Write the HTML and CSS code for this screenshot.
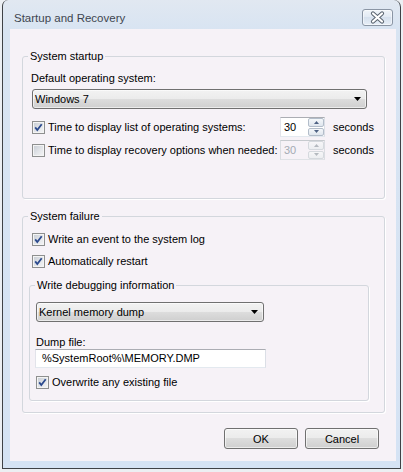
FILE: index.html
```html
<!DOCTYPE html>
<html>
<head>
<meta charset="utf-8">
<title>Startup and Recovery</title>
<link rel="stylesheet" href="styles.css">
</head>
<body>
<div class="window">
  <div class="titlebar">
    <div class="title">Startup and Recovery</div>
    <div class="close">
      <svg width="29" height="15" viewBox="0 0 29 15">
        <path d="M10 3.5 L19 11.5 M19 3.5 L10 11.5" stroke="#59636f" stroke-width="4.2" stroke-linecap="round" fill="none"/>
        <path d="M10 3.5 L19 11.5 M19 3.5 L10 11.5" stroke="#ffffff" stroke-width="2.2" stroke-linecap="round" fill="none"/>
      </svg>
    </div>
  </div>
  <div class="content">
    <fieldset class="group g1">
      <legend>System startup</legend>
      <div class="lbl">Default operating system:</div>
      <div class="combo c1"><span class="ctext">Windows 7</span><svg class="arr" width="7" height="4" viewBox="0 0 7 4"><path d="M0 0H7L3.5 4Z" fill="#000"/></svg></div>
      <div class="trow r1">
        <label class="chk"><span class="cb"><svg width="11" height="11" viewBox="0 0 11 11"><path d="M2.2 5.4 L4.3 8 L8.7 2.3" stroke="#2c4a8e" stroke-width="1.8" fill="none"/></svg></span>Time to display list of operating systems:</label>
        <div class="spin"><span class="val">30</span><span class="sbs"><span class="sb"><svg width="5" height="3" viewBox="0 0 5 3"><path d="M2.5 0L5 3H0Z" fill="#4d6183"/></svg></span><span class="sb"><svg width="5" height="3" viewBox="0 0 5 3"><path d="M0 0H5L2.5 3Z" fill="#4d6183"/></svg></span></span></div>
        <span class="unit">seconds</span>
      </div>
      <div class="trow r2">
        <label class="chk"><span class="cb"></span>Time to display recovery options when needed:</label>
        <div class="spin dis"><span class="val">30</span><span class="sbs"><span class="sb"><svg width="5" height="3" viewBox="0 0 5 3"><path d="M2.5 0L5 3H0Z" fill="#b4b9bf"/></svg></span><span class="sb"><svg width="5" height="3" viewBox="0 0 5 3"><path d="M0 0H5L2.5 3Z" fill="#b4b9bf"/></svg></span></span></div>
        <span class="unit">seconds</span>
      </div>
    </fieldset>

    <fieldset class="group g2">
      <legend>System failure</legend>
      <label class="chk line first"><span class="cb"><svg width="11" height="11" viewBox="0 0 11 11"><path d="M2.2 5.4 L4.3 8 L8.7 2.3" stroke="#2c4a8e" stroke-width="1.8" fill="none"/></svg></span>Write an event to the system log</label>
      <label class="chk line second"><span class="cb"><svg width="11" height="11" viewBox="0 0 11 11"><path d="M2.2 5.4 L4.3 8 L8.7 2.3" stroke="#2c4a8e" stroke-width="1.8" fill="none"/></svg></span>Automatically restart</label>
      <fieldset class="group inner">
        <legend>Write debugging information</legend>
        <div class="combo c2"><span class="ctext">Kernel memory dump</span><svg class="arr" width="7" height="4" viewBox="0 0 7 4"><path d="M0 0H7L3.5 4Z" fill="#000"/></svg></div>
        <div class="lbl2">Dump file:</div>
        <div class="tb">%SystemRoot%\MEMORY.DMP</div>
        <label class="chk line over"><span class="cb"><svg width="11" height="11" viewBox="0 0 11 11"><path d="M2.2 5.4 L4.3 8 L8.7 2.3" stroke="#2c4a8e" stroke-width="1.8" fill="none"/></svg></span>Overwrite any existing file</label>
      </fieldset>
    </fieldset>

    <div class="buttons">
      <button class="btn">OK</button>
      <button class="btn">Cancel</button>
    </div>
  </div>
</div>
</body>
</html>
```
FILE: styles.css
```css
html, body {
  margin: 0;
  padding: 0;
}
body {
  background: #eceff3;
  font-family: "Liberation Sans", Arial, sans-serif;
  font-size: 11px;
  color: #000;
}
.window {
  margin-left: 2px;
  width: 399px;
  height: 469px;
  box-sizing: border-box;
  border: 1px solid #3f4246;
  border-top: none;
  border-radius: 6px 7px 0 0;
  background: linear-gradient(#e1e8f1 0, #d8e4f2 30px, #d5e3f4 100%);
  padding: 0 4px 7px 7px;
  display: flex;
  flex-direction: column;
}
.titlebar {
  height: 29px;
  display: flex;
  align-items: flex-start;
  flex: none;
}
.title {
  flex: 1;
  margin: 11px 0 0 4px;
  font-size: 11.5px;
  line-height: 14px;
  color: #3e4550;
}
.close {
  margin: 9px 3px 0 0;
  width: 31px;
  height: 17px;
  box-sizing: border-box;
  border: 1px solid #8a95a4;
  border-radius: 3px;
  background: linear-gradient(rgba(255,255,255,0.55), rgba(255,255,255,0.15) 50%, rgba(200,212,228,0.3) 50%, rgba(255,255,255,0.35));
  box-shadow: inset 0 0 0 1px rgba(255,255,255,0.5);
}
.close svg { display: block; }
.content {
  height: 432px;
  flex: none;
  box-sizing: border-box;
  background: #f6f2f7;
  padding: 0 11px 0 12px;
  display: flex;
  flex-direction: column;
}
.group {
  margin: 0;
  min-width: 0;
  border: 1px solid #d3d7dd;
  border-radius: 3px;
  box-shadow: 1px 1px 0 #ffffff;
  padding: 0 0 0 6px;
}
.group > legend {
  padding: 0 2px;
  margin-left: -1px;
  line-height: 14px;
}
.g1 {
  margin-top: 20px;
  padding-top: 8px;
  padding-bottom: 38px;
}
.g2 {
  margin-top: 10px;
  padding-top: 9px;
  padding-bottom: 11px;
}
.inner {
  margin-top: 10px;
  width: 340px;
  box-sizing: border-box;
  padding: 10px 0 11px 5px;
}
.inner > legend {
  margin-left: 0;
}
.lbl {
  margin-left: 2px;
  line-height: 14px;
}
.combo {
  height: 20px;
  box-sizing: border-box;
  border: 1px solid #707070;
  border-radius: 3px;
  background: linear-gradient(#f2f2f2 0, #ebebeb 50%, #dddddd 50%, #cfcfcf 100%);
  box-shadow: inset 0 0 0 1px rgba(255,255,255,0.6);
  display: flex;
  align-items: center;
  padding-left: 2px;
}
.combo .ctext { flex: 1; line-height: 14px; }
.combo .arr { margin-right: 5px; display: block; }
.c1 {
  margin: 4px 0 0 3px;
  width: 335px;
}
.c2 {
  margin-left: 1px;
  width: 228px;
}
.chk {
  display: flex;
  align-items: center;
  gap: 3px;
  line-height: 14px;
  white-space: nowrap;
}
.cb {
  width: 13px;
  height: 13px;
  box-sizing: border-box;
  flex: none;
  border: 1px solid #8e8f8f;
  background: linear-gradient(135deg, #c6cbd3 0, #e3e5e9 55%, #f5f5f6 100%);
  box-shadow: inset 0 0 0 1px #f4f4f4;
}
.cb svg { display: block; }
.trow {
  display: grid;
  grid-template-columns: 248px 45px auto;
  align-items: center;
  height: 20px;
  margin-left: 3px;
}
.r1 { margin-top: 8px; }
.r2 { margin-top: 3px; }
.spin {
  height: 20px;
  box-sizing: border-box;
  border: 1px solid;
  border-color: #abadb3 #dbdfe6 #e3e9ef #e2e3ea;
  background: #ffffff;
  display: flex;
}
.spin .val {
  flex: 1;
  padding-left: 3px;
  line-height: 18px;
}
.sbs {
  width: 16px;
  display: flex;
  flex-direction: column;
  gap: 1px;
  padding: 0 0 0 0;
}
.sb {
  flex: 1;
  box-sizing: border-box;
  border: 1px solid #b3bdca;
  border-radius: 2px;
  background: linear-gradient(#f4f7fa, #dfe6ee);
  display: flex;
  align-items: center;
  justify-content: center;
}
.sb svg { display: block; }
.spin.dis {
  background: transparent;
  border-color: #c6cace #dadde2 #dfe2e6 #dadde2;
  color: #a4abb4;
}
.spin.dis .sb {
  border-color: #d5d9de;
  background: linear-gradient(#f6f6f8, #eceef1);
}
.unit {
  padding-left: 8px;
}
.line {
  height: 14px;
}
.g2 > .line { margin-left: 3px; }
.second { margin-top: 8px; }
.lbl2 {
  margin-top: 14px;
  margin-left: 1px;
  line-height: 13px;
}
.tb {
  width: 231px;
  height: 19px;
  box-sizing: border-box;
  border: 1px solid;
  border-color: #abadb3 #dbdfe6 #e3e9ef #e2e3ea;
  background: #ffffff;
  padding-left: 6px;
  line-height: 17px;
}
.over {
  margin-top: 7px;
  margin-left: 1px;
}
.buttons {
  margin-top: 15px;
  display: flex;
  justify-content: flex-end;
  gap: 7px;
  padding-right: 6px;
}
.btn {
  width: 74px;
  height: 21px;
  box-sizing: border-box;
  border: 1px solid #707070;
  border-radius: 3px;
  background: linear-gradient(#f2f2f2 0, #ebebeb 50%, #dddddd 50%, #cfcfcf 100%);
  box-shadow: inset 0 0 0 1px rgba(255,255,255,0.6);
  font-family: inherit;
  font-size: 11px;
  color: #000;
  padding: 0;
  margin: 0;
}
```
